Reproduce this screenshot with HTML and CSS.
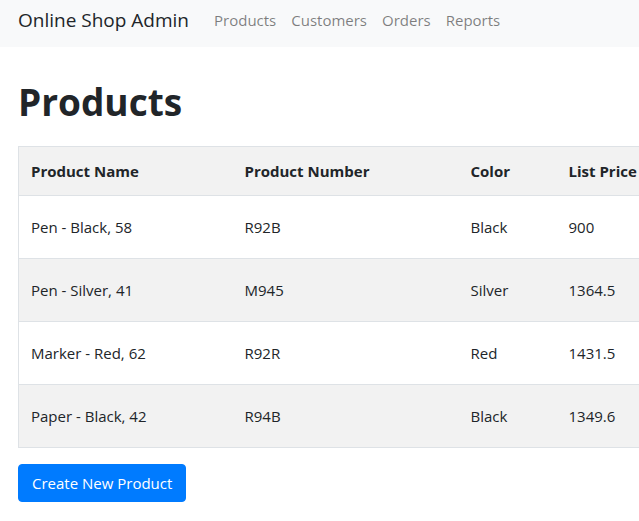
FILE: index.html
```html
<!DOCTYPE html>
<html>
<head>
<meta charset="utf-8">
<link rel="stylesheet" href="styles.css">
</head>
<body>
<nav class="navbar">
  <a class="brand" href="#">Online Shop Admin</a>
  <ul class="nav-links">
    <li><a href="#">Products</a></li>
    <li><a href="#">Customers</a></li>
    <li><a href="#">Orders</a></li>
    <li><a href="#">Reports</a></li>
  </ul>
</nav>
<main class="content">
  <h1 class="title">Products</h1>
  <div class="table-wrap">
    <table class="products">
      <colgroup>
        <col class="c1"><col class="c2"><col class="c3"><col class="c4">
      </colgroup>
      <thead>
        <tr><th>Product Name</th><th>Product Number</th><th>Color</th><th>List Price</th></tr>
      </thead>
      <tbody>
        <tr><td>Pen - Black, 58</td><td>R92B</td><td>Black</td><td>900</td></tr>
        <tr><td>Pen - Silver, 41</td><td>M945</td><td>Silver</td><td>1364.5</td></tr>
        <tr><td>Marker - Red, 62</td><td>R92R</td><td>Red</td><td>1431.5</td></tr>
        <tr><td>Paper - Black, 42</td><td>R94B</td><td>Black</td><td>1349.6</td></tr>
      </tbody>
    </table>
  </div>
  <button class="btn-primary" type="button">Create New Product</button>
</main>
</body>
</html>
```
FILE: styles.css
```css
html, body {
  margin: 0;
  padding: 0;
  overflow: hidden;
}
body {
  font-family: "Open Sans", "Noto Sans", sans-serif;
  font-size: 15px;
  color: #212529;
  background: #fff;
}
.navbar {
  display: flex;
  align-items: center;
  height: 47px;
  padding: 0 18px 7px;
  box-sizing: border-box;
  background: #f8f9fa;
}
.brand {
  font-size: 19px;
  color: #212529;
  text-decoration: none;
  margin-right: 25px;
}
.nav-links {
  display: flex;
  list-style: none;
  margin: 0;
  padding: 0;
  gap: 15px;
}
.nav-links a {
  color: rgba(0,0,0,.5);
  text-decoration: none;
  font-size: 15px;
}
.content {
  padding: 0 0 0 18px;
}
.title {
  font-size: 37px;
  font-weight: 700;
  line-height: 48px;
  margin: 31px 0 20px;
}
.table-wrap {
  overflow: hidden;
  margin-bottom: 16px;
}
.products {
  border-collapse: collapse;
  table-layout: fixed;
  width: 700px;
  border: 1px solid #dee2e6;
}
.c1 { width: 214px; }
.c2 { width: 226px; }
.c3 { width: 98px; }
.products th, .products td {
  text-align: left;
  padding: 0 12px;
  border-top: 1px solid #dee2e6;
  line-height: 24px;
  white-space: nowrap;
}
.products th {
  height: 48px;
  font-weight: 700;
  background: #f2f2f2;
}
.products td {
  height: 62px;
}
.products tbody tr:nth-child(even) td {
  background: #f2f2f2;
}
.btn-primary {
  font-family: inherit;
  font-size: 15px;
  color: #fff;
  background: #007bff;
  border: 1px solid #007bff;
  border-radius: 4px;
  height: 38px;
  padding: 0 13px;
  cursor: pointer;
}
```
